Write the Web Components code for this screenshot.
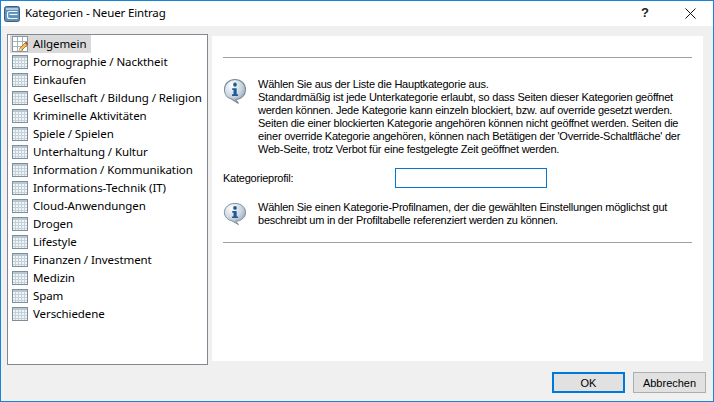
<!DOCTYPE html>
<html lang="de">
<head>
<meta charset="utf-8">
<title>Kategorien - Neuer Eintrag</title>
<style>
  html, body { margin: 0; padding: 0; background: #f0f0f0; }
  body { width: 714px; height: 402px; overflow: hidden; font-family: "Noto Sans", "Open Sans", sans-serif; }
</style>
</head>
<body>
<dialog-window heading="Kategorien - Neuer Eintrag">
  <category-list>
    <category-item selected>Allgemein</category-item>
    <category-item>Pornographie / Nacktheit</category-item>
    <category-item>Einkaufen</category-item>
    <category-item>Gesellschaft / Bildung / Religion</category-item>
    <category-item>Kriminelle Aktivitäten</category-item>
    <category-item>Spiele / Spielen</category-item>
    <category-item>Unterhaltung / Kultur</category-item>
    <category-item>Information / Kommunikation</category-item>
    <category-item>Informations-Technik (IT)</category-item>
    <category-item>Cloud-Anwendungen</category-item>
    <category-item>Drogen</category-item>
    <category-item>Lifestyle</category-item>
    <category-item>Finanzen / Investment</category-item>
    <category-item>Medizin</category-item>
    <category-item>Spam</category-item>
    <category-item>Verschiedene</category-item>
  </category-list>
  <form-panel>
    <info-note>Wählen Sie aus der Liste die Hauptkategorie aus.<br>Standardmäßig ist jede Unterkategorie erlaubt, so dass Seiten dieser Kategorien geöffnet<br>werden können. Jede Kategorie kann einzeln blockiert, bzw. auf override gesetzt werden.<br>Seiten die einer blockierten Kategorie angehören können nicht geöffnet werden. Seiten die<br>einer override Kategorie angehören, können nach Betätigen der 'Override-Schaltfläche' der<br>Web-Seite, trotz Verbot für eine festgelegte Zeit geöffnet werden.</info-note>
    <profile-field label="Kategorieprofil:"></profile-field>
    <info-note compact>Wählen Sie einen Kategorie-Profilnamen, der die gewählten Einstellungen möglichst gut<br>beschreibt um in der Profiltabelle referenziert werden zu können.</info-note>
  </form-panel>
  <dialog-button slot="actions" default>OK</dialog-button>
  <dialog-button slot="actions">Abbrechen</dialog-button>
</dialog-window>

<script>
const windowTemplate = document.createElement("template");
windowTemplate.innerHTML = `
  <style>
    :host {
      display: flex;
      flex-direction: column;
      box-sizing: border-box;
      width: 714px;
      height: 402px;
      border: 1px solid #1883d7;
      background: #f0f0f0;
      color: #000;
    }
    header {
      display: flex;
      align-items: center;
      height: 25px;
      background: #fff;
      padding-left: 3px;
      flex: none;
    }
    header svg.app { width: 16px; height: 16px; margin-right: 5px; flex: none; }
    h1 { flex: 1; margin: 0 0 1px 0; font: 400 11.5px/16px "Noto Sans", sans-serif; letter-spacing: -0.15px; color: #000; }
    .help { width: 18px; text-align: center; font: 700 13px/16px "Liberation Sans", sans-serif; color: #222; margin: 0 31px 1px 0; }
    header svg.close { width: 11px; height: 11px; margin: 0 17px 1px 0; flex: none; }
    main {
      display: flex;
      gap: 4px;
      padding: 8px 6px 0 6px;
      flex: none;
      height: 331px;
    }
    footer {
      display: flex;
      justify-content: flex-end;
      gap: 8px;
      padding: 7px 7px 0 0;
    }
  </style>
  <header>
    <svg class="app" viewBox="0 0 16 16">
      <rect x="0.5" y="0.5" width="15" height="15" rx="2" fill="#5e90b8" stroke="#3c5f80"/>
      <rect x="2" y="2" width="12" height="2" fill="#a9cbe4"/>
      <path d="M13.5 5.5H5.5Q3.5 5.5 3.5 7.5V10.5Q3.5 12.5 5.5 12.5H13.5" fill="none" stroke="#eef6fb" stroke-width="1.2"/>
      <path d="M13.5 8.5H5.5" stroke="#eef6fb" stroke-width="1.2"/>
    </svg>
    <h1></h1>
    <span class="help">?</span>
    <svg class="close" viewBox="0 0 11 11"><path d="M0.5 0.5L10.5 10.5M10.5 0.5L0.5 10.5" stroke="#111" stroke-width="1" fill="none"/></svg>
  </header>
  <main><slot></slot></main>
  <footer><slot name="actions"></slot></footer>
`;

class DialogWindow extends HTMLElement {
  constructor() {
    super();
    this.attachShadow({ mode: "open" });
    this.shadowRoot.appendChild(windowTemplate.content.cloneNode(true));
    this.shadowRoot.querySelector("h1").textContent = this.getAttribute("heading");
  }
}

const listTemplate = document.createElement("template");
listTemplate.innerHTML = `
  <style>
    :host {
      display: flex;
      flex-direction: column;
      box-sizing: border-box;
      width: 201px;
      height: 331px;
      flex: none;
      background: #fff;
      border: 1px solid #828790;
      padding: 0 0 0 2px;
    }
  </style>
  <slot></slot>
`;

class CategoryList extends HTMLElement {
  constructor() {
    super();
    this.attachShadow({ mode: "open" });
    this.shadowRoot.appendChild(listTemplate.content.cloneNode(true));
  }
}

const itemTemplate = document.createElement("template");
itemTemplate.innerHTML = `
  <style>
    :host {
      display: flex;
      align-items: center;
      height: 18px;
      font: 400 11.5px/18px "Noto Sans", sans-serif;
      letter-spacing: -0.08px;
      color: #000;
      white-space: nowrap;
    }
    svg { width: 16px; flex: none; margin: 0 5px 0 2px; }
    .plain { height: 14px; }
    .edit { height: 16px; display: none; }
    :host([selected]) .plain { display: none; }
    :host([selected]) .edit { display: block; }
    :host([selected]) { background: linear-gradient(#d9d9d9, #d9d9d9) no-repeat 0 0 / 81px 18px; }
  </style>
  <svg class="plain" viewBox="0 0 16 14">
    <rect x="0" y="0" width="16" height="14" fill="#7f8e9b"/>
    <rect x="1" y="1" width="14" height="12" fill="#f1f4f7"/>
    <rect x="1" y="1" width="14" height="2" fill="#b9c7d3"/>
    <path d="M3.5 3V13M6.5 3V13M9.5 3V13M12.5 3V13M1 5.5H15M1 8.5H15M1 11.5H15" stroke="#c4d0da" stroke-width="1"/>
  </svg>
  <svg class="edit" viewBox="0 0 16 16">
    <rect x="0.5" y="0.5" width="15" height="15" fill="#fff" stroke="#8a96a1"/>
    <path d="M5.5 1V15M10.5 1V15M1 5.5H15M1 10.5H15" stroke="#a7b2bc" stroke-width="1"/>
    <path d="M7 15.5L8 12L14 6L16 8L10 14Z" fill="#f2c14e" stroke="#8a5a20" stroke-width="0.7"/>
    <path d="M13 7L15 9L16 8L14 6Z" fill="#c0392b"/>
    <path d="M7 15.5L8 12L10 14Z" fill="#f6e6c4"/>
  </svg>
  <span class="label"><slot></slot></span>
`;

class CategoryItem extends HTMLElement {
  constructor() {
    super();
    this.attachShadow({ mode: "open" });
    this.shadowRoot.appendChild(itemTemplate.content.cloneNode(true));
  }
}

const panelTemplate = document.createElement("template");
panelTemplate.innerHTML = `
  <style>
    :host {
      display: flex;
      flex-direction: column;
      box-sizing: border-box;
      flex: none;
      width: 491px;
      height: 325px;
      margin-top: 2px;
      background: #fff;
      padding: 21px 11px 0 11px;
    }
    hr { margin: 0; border: 0; height: 1px; background: #a0a0a0; flex: none; }
    .body { display: flex; flex-direction: column; height: 184px; box-sizing: border-box; padding-top: 20px; }
  </style>
  <hr>
  <div class="body"><slot></slot></div>
  <hr>
`;

class FormPanel extends HTMLElement {
  constructor() {
    super();
    this.attachShadow({ mode: "open" });
    this.shadowRoot.appendChild(panelTemplate.content.cloneNode(true));
  }
}

const noteTemplate = document.createElement("template");
noteTemplate.innerHTML = `
  <style>
    :host {
      display: flex;
      gap: 11px;
      font: 400 11px/13px "Liberation Sans", Arial, sans-serif;
      letter-spacing: -0.23px;
      color: #000;
      white-space: nowrap;
    }
    svg { width: 24px; height: 27px; flex: none; }
    :host([compact]) svg { height: 24px; margin-top: 1px; }
  </style>
  <svg viewBox="0 0 26 26" preserveAspectRatio="none">
    <defs>
      <radialGradient id="bubble" cx="35%" cy="25%" r="80%">
        <stop offset="0" stop-color="#ffffff"/>
        <stop offset="0.6" stop-color="#c7d3de"/>
        <stop offset="1" stop-color="#8d9cab"/>
      </radialGradient>
    </defs>
    <path d="M13 1.5C19.6 1.5 24.5 5.8 24.5 11.2C24.5 16.6 19.6 20.8 13.8 20.8L16.8 24.5L9.6 20.4C4.8 19.4 1.5 15.8 1.5 11.2C1.5 5.8 6.4 1.5 13 1.5Z" fill="url(#bubble)" stroke="#76889a"/>
    <circle cx="13" cy="6.4" r="2" fill="#1f5c93"/>
    <path d="M10 9.8H14.8V15.6H16.2V17.4H9.8V15.6H11.4V11.6H10Z" fill="#1f5c93"/>
  </svg>
  <div class="text"><slot></slot></div>
`;

class InfoNote extends HTMLElement {
  constructor() {
    super();
    this.attachShadow({ mode: "open" });
    this.shadowRoot.appendChild(noteTemplate.content.cloneNode(true));
  }
}

const fieldTemplate = document.createElement("template");
fieldTemplate.innerHTML = `
  <style>
    :host {
      display: flex;
      align-items: center;
      margin: 12px 0 13px 0;
      height: 20px;
      font: 400 11px/13px "Liberation Sans", Arial, sans-serif;
      letter-spacing: -0.23px;
      color: #000;
    }
    label { width: 172px; flex: none; }
    input {
      box-sizing: border-box;
      width: 152px;
      height: 20px;
      margin: 0;
      padding: 0 2px;
      border: 1px solid #0078d7;
      background: #fff;
      outline: none;
    }
  </style>
  <label></label>
  <input type="text">
`;

class ProfileField extends HTMLElement {
  constructor() {
    super();
    this.attachShadow({ mode: "open" });
    this.shadowRoot.appendChild(fieldTemplate.content.cloneNode(true));
    this.shadowRoot.querySelector("label").textContent = this.getAttribute("label");
  }
}

const buttonTemplate = document.createElement("template");
buttonTemplate.innerHTML = `
  <style>
    :host {
      display: flex;
      align-items: center;
      justify-content: center;
      box-sizing: border-box;
      width: 73px;
      height: 21px;
      background: #e1e1e1;
      border: 1px solid #adadad;
      font: 400 11px/16px "Liberation Sans", sans-serif;
      color: #000;
    }
    :host([default]) { border: 2px solid #0078d7; }
  </style>
  <slot></slot>
`;

class DialogButton extends HTMLElement {
  constructor() {
    super();
    this.attachShadow({ mode: "open" });
    this.shadowRoot.appendChild(buttonTemplate.content.cloneNode(true));
  }
}

customElements.define("dialog-window", DialogWindow);
customElements.define("category-list", CategoryList);
customElements.define("category-item", CategoryItem);
customElements.define("form-panel", FormPanel);
customElements.define("info-note", InfoNote);
customElements.define("profile-field", ProfileField);
customElements.define("dialog-button", DialogButton);
</script>
</body>
</html>
